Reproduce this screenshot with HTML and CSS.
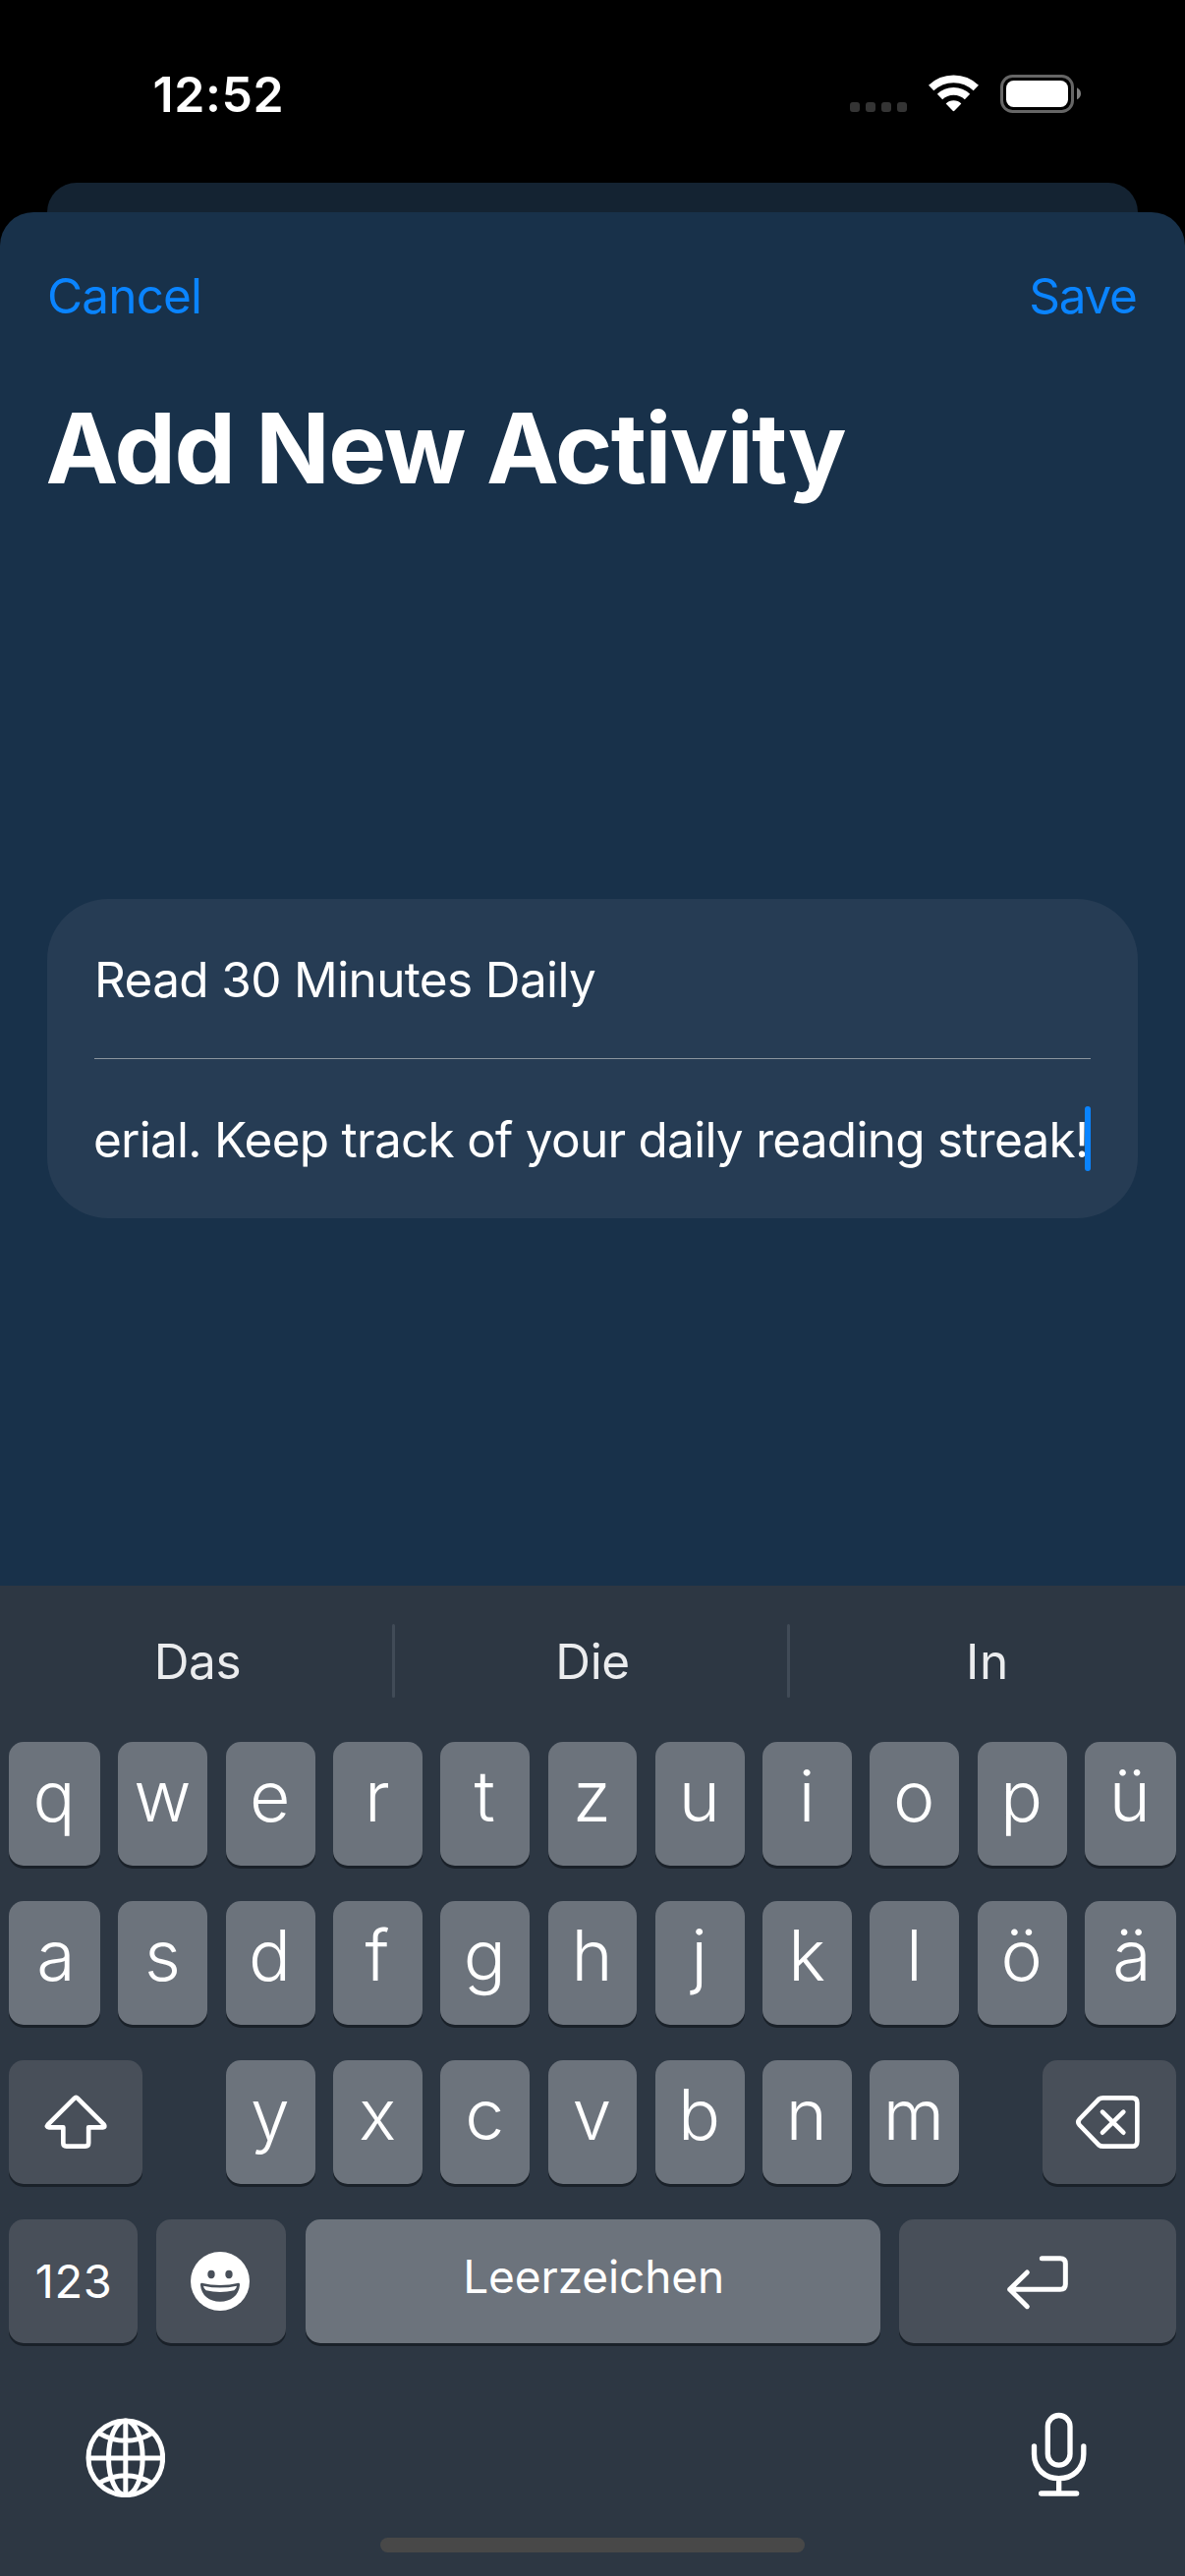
FILE: index.html
```html
<!DOCTYPE html>
<html lang="de">
<head>
<meta charset="utf-8">
<title>Add New Activity</title>
<link rel="stylesheet" href="styles.css">
</head>
<body>
<header class="status">
  <span class="time">12:52</span>
  <div class="status-icons">
    <svg class="dots" viewBox="60 132 174 30" fill="#343434"><rect x="60" y="132" width="30" height="30" rx="9"/><rect x="108" y="132" width="30" height="30" rx="9"/><rect x="156" y="132" width="30" height="30" rx="9"/><rect x="204" y="132" width="30" height="30" rx="9"/></svg>
    <svg class="wifi" viewBox="300 50 153 113" fill="none" stroke="#fff" stroke-width="23"><path d="M308 90.7A99 99 0 0 1 445 90.7"/><path d="M334.5 117.5A60.5 60.5 0 0 1 418.5 117.5"/><path d="M353 138.500A34 34 0 0 1 400 138.500L379 160.500Q376.500 163 374 160.500Z" fill="#fff" stroke="none"/></svg>
    <svg class="battery" viewBox="519 48 246 117"><rect x="523.500" y="52.500" width="216" height="108" rx="33" fill="none" stroke="#666" stroke-width="9"/><rect x="537" y="66" width="189" height="81" rx="23" fill="#fff"/><path d="M753 88Q765 94 765 106T753 124Z" fill="#7f7f7f"/></svg>
  </div>
</header>
<div class="back-sheet"></div>
<main class="sheet">
  <nav class="actions"><a class="cancel">Cancel</a><a class="save">Save</a></nav>
  <h1 class="title">Add New Activity</h1>
  <section class="card">
    <div class="field"><span>Read 30 Minutes Daily</span></div>
    <div class="field"><span>erial. Keep track of your daily reading streak!</span><i class="caret"></i></div>
  </section>
</main>
<section class="keyboard">
  <div class="suggestions"><span>Das</span><i></i><span>Die</span><i></i><span>In</span></div>
  <div class="row letters"><b>q</b><b>w</b><b>e</b><b>r</b><b>t</b><b>z</b><b>u</b><b>i</b><b>o</b><b>p</b><b>ü</b></div>
  <div class="row letters"><b class="nudge">a</b><b>s</b><b>d</b><b>f</b><b>g</b><b>h</b><b>j</b><b>k</b><b>l</b><b>ö</b><b class="nudge">ä</b></div>
  <div class="row shift-row">
    <div class="key dark wide"><svg viewBox="28 51 408 378" fill="none" stroke="#fff" stroke-width="14" stroke-linejoin="round"><path d="M228.500 167Q233 161.500 237.500 167L318 247Q324 255 315 256H271.500V304Q271.500 314 261.500 314H204Q194 314 194 304V256H151Q141 255 147 248Z"/></svg></div>
    <div class="row letters seven"><b>y</b><b>x</b><b>c</b><b>v</b><b>b</b><b>n</b><b>m</b></div>
    <div class="key dark wide"><svg viewBox="273 51 408 378" fill="none" stroke="#fff" stroke-width="14" stroke-linecap="round" stroke-linejoin="round"><path d="M445 170Q450 166 458 166H547Q562 166 562 181V299Q562 314 547 314H458Q450 314 445 310L386 249Q378 240 386 231ZM456 209L520 272M520 209L456 272"/></svg></div>
  </div>
  <div class="row bottom-row">
    <div class="key dark numbers">123</div>
    <div class="key dark emoji"><svg viewBox="477 537 396 378"><circle cx="672" cy="726" r="90" fill="#fff"/><g fill="#484f59"><ellipse cx="645" cy="705" rx="11" ry="12.500"/><ellipse cx="699" cy="705" rx="11" ry="12.500"/><path d="M615 731Q672 745 729 731Q733 732 732 738C729 770 705 788 672 788S615 770 612 738Q611 732 615 731Z"/></g><path d="M621 740Q672 751 723 740Q722 749 715 754Q672 764 629 754Q622 749 621 740Z" fill="#fff"/></svg></div>
    <div class="key space">Leerzeichen</div>
    <div class="key dark return"><svg viewBox="-165 537 846 378" fill="none" stroke="#fff" stroke-width="15" stroke-linecap="round" stroke-linejoin="round"><path d="M271 656H327Q343 656 343 672V735Q343 751 327 751H173M226 699L173 751L226 803"/></svg></div>
  </div>
  <div class="tools">
    <svg class="globe" viewBox="260 1142 245 245" fill="none" stroke="#fff" stroke-width="15"><circle cx="382.500" cy="1264.500" r="113.500"/><ellipse cx="382.500" cy="1264.500" rx="52" ry="113.500"/><path d="M382.500 1150V1380M268 1265H497M300 1188Q382 1236 465 1188M300 1342Q382 1294 465 1342"/></svg>
    <svg class="mic" viewBox="238 1126 172 260" fill="none" stroke="#fff" stroke-width="16" stroke-linecap="round"><rect x="290" y="1136.500" width="68" height="152" rx="34"/><path d="M248.500 1231V1255C248.500 1300 282 1329 324 1329S399.500 1300 399.500 1255V1231M324 1329V1374M270 1375H378"/></svg>
  </div>
  <div class="home"></div>
</section>
</body>
</html>
```
FILE: styles.css
```css
* { box-sizing: border-box; }
body {
  margin: 0;
  width: 1206px;
  height: 2622px;
  display: flex;
  flex-direction: column;
  overflow: hidden;
  background: #000;
  color: #fff;
  font-family: "Inter", "Liberation Sans", sans-serif;
  font-size: 49.5px;
}
svg { display: block; flex: none; }

.status {
  height: 186px;
  padding: 66px 106px 0 155.5px;
  display: flex;
  justify-content: space-between;
  align-items: flex-start;
}
.time { font-size: 50px; font-weight: 600; line-height: 60px; letter-spacing: 0.6px; }
.status-icons { height: 49px; display: flex; align-items: flex-end; }
.dots { width: 58px; height: 10px; margin: 0 22px 1px 0; }
.wifi { width: 51px; height: 37.67px; margin: 0 22px 1px 0; }
.battery { width: 82px; height: 39px; }

.back-sheet { height: 30px; margin: 0 48px; background: #142332; border-radius: 30px 30px 0 0; }
.sheet {
  height: 1398px;
  padding: 0 48px;
  background: #18314a;
  border-radius: 34px 34px 0 0;
}
.actions {
  height: 170px;
  display: flex;
  justify-content: space-between;
  align-items: center;
  color: #0a84ff;
}
.cancel { letter-spacing: -0.85px; }
.save { letter-spacing: -1.35px; margin-right: 1.5px; }
.title {
  margin: 10px 0 0 -1.5px;
  font-size: 99px;
  font-weight: 700;
  line-height: 120px;
  letter-spacing: -1.52px;
}
.card {
  height: 325px;
  margin-top: 399px;
  padding: 0 48px;
  background: #263c54;
  border-radius: 62px;
}
.field {
  position: relative;
  height: 162px;
  padding-top: 2px;
  display: flex;
  align-items: center;
  white-space: nowrap;
  letter-spacing: -0.64px;
}
.field + .field { height: 163px; border-top: 1px solid #8b949e; letter-spacing: -0.74px; }
.field + .field span { margin-left: -1px; }
.caret {
  position: absolute;
  right: 0;
  top: 48px;
  width: 6px;
  height: 66px;
  border-radius: 3px;
  background: #0a84ff;
}

.keyboard {
  height: 1008px;
  display: flex;
  flex-direction: column;
  background: #2d3743;
}
.suggestions {
  height: 153px;
  margin-bottom: 6px;
  padding-right: 3px;
  display: flex;
  align-items: center;
  color: #ebecee;
}
.suggestions span { flex: 1; text-align: center; padding-left: 3px; letter-spacing: -0.4px; }
.suggestions span:last-child { letter-spacing: 0.7px; }
.suggestions i { width: 3px; height: 75px; background: #414b57; border-radius: 2px; }

.row { display: flex; justify-content: space-between; height: 126px; margin: 0 9px 36px; }
.letters b, .key {
  height: 126px;
  display: flex;
  align-items: center;
  justify-content: center;
  background: #6c737c;
  border-radius: 15px;
  box-shadow: 0 3px 0 #1a2129;
}
.letters b { width: 90.9px; padding: 0 1px 16px 0; font-size: 71.5px; font-weight: 350; }
.letters b:first-child, .letters b:nth-child(11) { width: 93px; }
.letters b.nudge { padding: 0 0 16px 3px; }
.row .seven { width: 746px; margin: 0; }
.seven b:first-child { width: 90.9px; }
.key.dark { background: #484f59; }
.wide { width: 136px; }
.wide svg { width: 136px; height: 126px; }
.numbers { width: 131px; padding: 0 0 2px 1px; font-size: 47px; letter-spacing: 0.6px; }
.emoji { width: 132px; }
.emoji svg { width: 132px; height: 126px; }
.space { width: 585px; padding: 0 0 10px 2px; font-size: 46px; letter-spacing: -0.1px; }
.return { width: 282px; }
.return svg { width: 282px; height: 126px; }

.tools {
  height: 162px;
  padding: 34px 99.5px 0 86.7px;
  display: flex;
  justify-content: space-between;
  align-items: flex-start;
}
.globe { width: 81.67px; height: 81.67px; margin-top: 5.5px; }
.mic { width: 57.33px; height: 86.67px; }
.home { width: 432px; height: 15px; margin: 0 auto; border-radius: 8px; background: #484848; }
```
